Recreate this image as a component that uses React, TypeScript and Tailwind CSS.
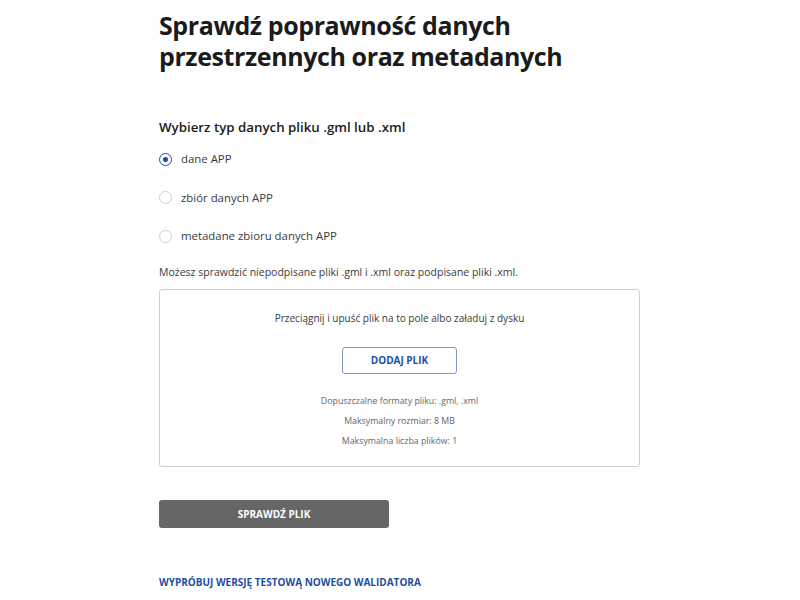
const Radio = ({ checked, label }: { checked?: boolean; label: string }) => (
  <label className="flex items-center gap-[9px] h-[20px]">
    <span
      className={`flex h-[13px] w-[13px] items-center justify-center rounded-full border ${
        checked ? "border-[#1f4ea1]" : "border-[#cfcfcf]"
      }`}
    >
      {checked && <span className="h-[5px] w-[5px] rounded-full bg-[#1f4ea1]" />}
    </span>
    <span className="text-[11.4px] text-[#3a3a3a]">{label}</span>
  </label>
)

export default function App() {
  return (
    <div className="min-h-screen w-full bg-white font-['Open_Sans',sans-serif] text-[#1b1b1b]">
      <div className="ml-[159px] w-[481px] pt-[10px]">
        <h1 className="text-[25px] font-bold leading-[31px] tracking-[-0.4px] text-[#1b1b1b]">
          Sprawdź poprawność danych
          <br />
          przestrzennych oraz metadanych
        </h1>

        <h2 className="mt-[44px] text-[13.3px] font-semibold leading-[22px] text-[#1b1b1b]">
          Wybierz typ danych pliku .gml lub .xml
        </h2>

        <div className="mt-[11px] flex flex-col gap-[18.5px]">
          <Radio checked label="dane APP" />
          <Radio label="zbiór danych APP" />
          <Radio label="metadane zbioru danych APP" />
        </div>

        <p className="mt-[17px] text-[10.5px] leading-[18px] text-[#3a3a3a]">
          Możesz sprawdzić niepodpisane pliki .gml i .xml oraz podpisane pliki .xml.
        </p>

        <div className="mt-[8px] flex h-[178px] flex-col items-center rounded-[3px] border border-[#cfcfcf] pt-[19px]">
          <p className="text-[10px] leading-[18px] text-[#3a3a3a]">
            Przeciągnij i upuść plik na to pole albo załaduj z dysku
          </p>
          <button
            type="button"
            className="mt-[20px] flex h-[27px] w-[115px] items-center justify-center rounded-[3px] border border-[#7f97c9] text-[10px] font-bold text-[#1f4ea1]"
          >
            DODAJ PLIK
          </button>
          <div className="mt-[20px] flex flex-col items-center gap-[5px] text-[8.8px] leading-[15px] text-[#666]">
            <span>Dopuszczalne formaty pliku: .gml, .xml</span>
            <span>Maksymalny rozmiar: 8 MB</span>
            <span>Maksymalna liczba plików: 1</span>
          </div>
        </div>

        <button
          type="button"
          className="mt-[33px] flex h-[28px] w-[230px] items-center justify-center rounded-[3px] bg-[#666666] text-[10px] font-bold text-white"
        >
          SPRAWDŹ PLIK
        </button>

        <a href="#" className="mt-[45px] block text-[10px] font-bold leading-[18px] text-[#1f4ea1]">
          WYPRÓBUJ WERSJĘ TESTOWĄ NOWEGO WALIDATORA
        </a>
      </div>
    </div>
  )
}
